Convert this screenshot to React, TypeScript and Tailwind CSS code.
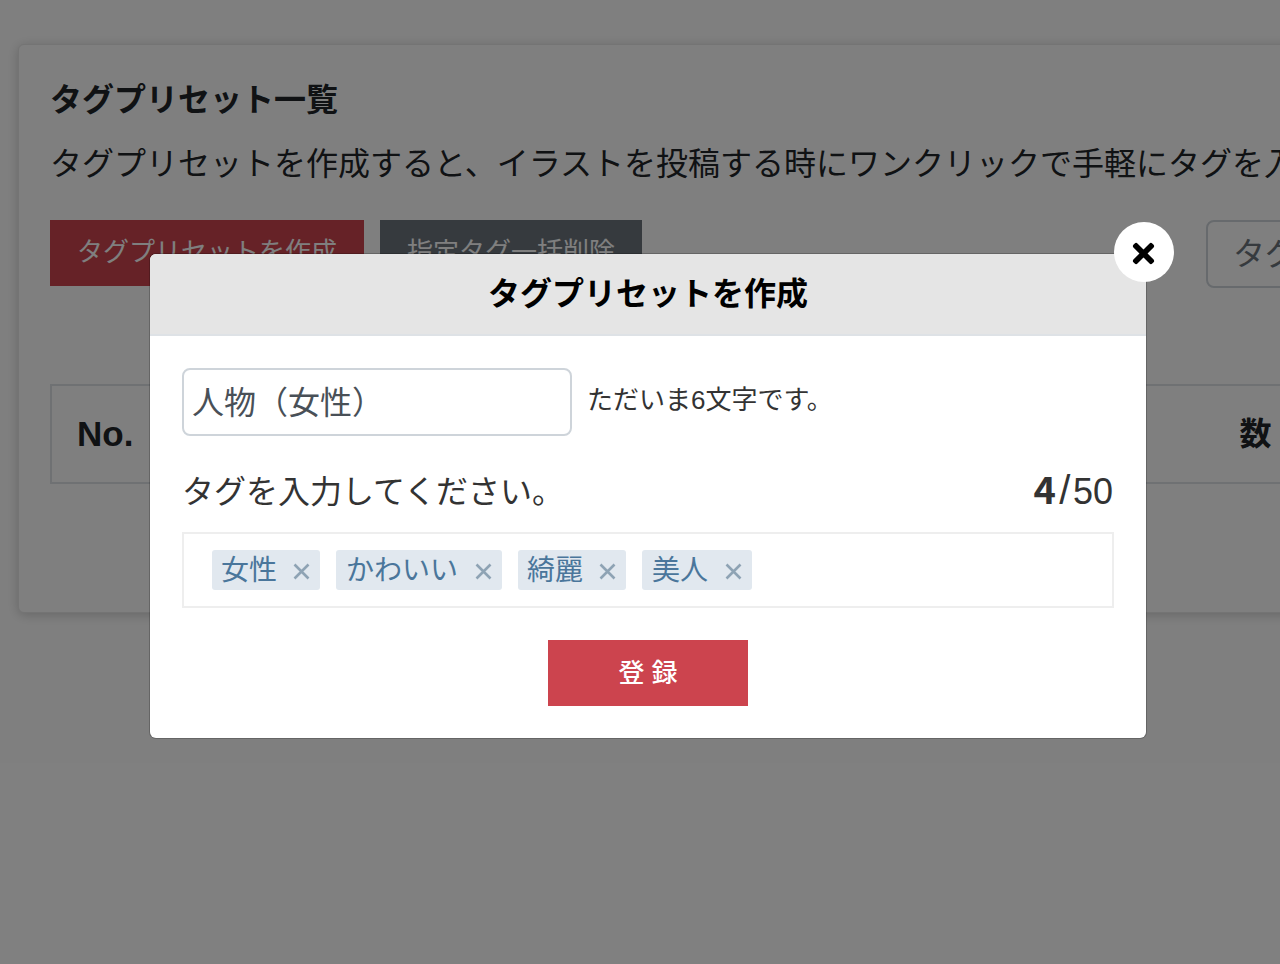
import React from 'react'
import { FaTimes } from 'react-icons/fa'

const tags = [
  { label: '女性', size: 'w-[108px] pl-[9px]' },
  { label: 'かわいい', size: 'w-[166px] pl-[10px]' },
  { label: '綺麗', size: 'w-[108px] pl-[9px]' },
  { label: '美人', size: 'w-[110px] pl-[10px]' },
]

function TagChip({ label, size }: { label: string; size: string }) {
  return (
    <span className={`flex h-10 items-center justify-between rounded-[3px] bg-[#e1e8ef] pr-[10px] text-[28px] leading-10 text-[#4a769b] ${size}`}>
      <span className="mt-[1px]">{label}</span>
      <svg width="17" height="17" viewBox="0 0 17 17" className="mt-[3px]">
        <path d="M1.5 1.5 15.5 15.5M15.5 1.5 1.5 15.5" stroke="#8ea3b4" strokeWidth="2.6" fill="none" />
      </svg>
    </span>
  )
}

function BackgroundPage() {
  return (
    <div className="ml-[18px] mt-[44px] h-[569px] w-[1500px] rounded-[6px] border border-[#e8e8e8] bg-white pl-[31px] pt-[31px] shadow-[0_2px_12px_rgba(0,0,0,0.2)]">
      <h2 className="text-[32px] font-bold leading-[48px] text-[#212529]">タグプリセット一覧</h2>
      <p className="mt-[16px] whitespace-nowrap text-[32px] leading-[48px] text-[#212529]">
        タグプリセットを作成すると、イラストを投稿する時にワンクリックで手軽にタグを入力できます。
      </p>
      <div className="mt-[32px] flex items-start gap-4">
        <button className="h-[66px] w-[314px] shrink-0 bg-[#cc444e] pb-[2px] text-[26px] text-white">タグプリセットを作成</button>
        <button className="h-[66px] w-[262px] shrink-0 bg-[#6c757d] pb-[2px] text-[26px] text-white">指定タグ一括削除</button>
        <div className="ml-[548px] flex h-[68px] w-[400px] shrink-0 items-center whitespace-nowrap rounded-[8px] border-2 border-[#ced4da] px-[25px] text-[32px] text-[#6c757d]">
          タグ名で検索
        </div>
      </div>
      <div className="mt-[96px] flex h-[100px] w-[1440px] items-center border-2 border-[#dee2e6] pl-[25px]">
        <span className="text-[35px] font-bold text-[#212529]">No.</span>
        <span className="ml-[1106px] text-[32px] font-bold text-[#212529]">数</span>
      </div>
    </div>
  )
}

export default function App() {
  return (
    <div className="relative h-[964px] w-[1280px] overflow-hidden bg-white font-['Liberation_Sans','Noto_Sans_CJK_JP',sans-serif]">
      <BackgroundPage />

      <div className="absolute inset-0 bg-black/50 pl-[150px] pt-[254px]">
        <div className="relative w-[996px] rounded-[6px] bg-white shadow-[0_0_0_1px_rgba(0,0,0,0.2)]">
          <button className="absolute left-[964px] top-[-32px] flex h-[60px] w-[60px] items-center justify-center rounded-full bg-white pr-[2px] pt-[2px] text-black">
            <FaTimes size={31} />
          </button>

          <div className="flex h-[82px] items-center justify-center rounded-t-[6px] border-b-2 border-[#dee2e6] bg-[#e5e5e5] text-[32px] font-bold text-black">
            タグプリセットを作成
          </div>

          <div className="p-[32px]">
            <div className="flex items-center gap-[15px]">
              <input
                defaultValue="人物（女性）"
                className="h-[68px] w-[390px] rounded-[8px] border-2 border-[#ced4da] bg-white px-2 pb-1 text-[32px] text-[#495057] outline-none"
              />
              <span className="pb-[4px] text-[26px] text-[#333]">ただいま6文字です。</span>
            </div>

            <div className="mt-[32px] flex h-[48px] items-center justify-between text-[32px] text-[#333]">
              <span>タグを入力してください。</span>
              <span className="mr-[1px] flex items-baseline pb-[6px] text-[36px] leading-none">
                <b className="mr-[1px] text-[38px] font-['Noto_Sans_CJK_JP',sans-serif]">4</b>
                <span className="mx-[2.5px] text-[40px]">/</span>
                50
              </span>
            </div>

            <div className="mt-[16px] flex h-[76px] items-center gap-4 border-2 border-[#eeeeee] pl-[28px]">
              {tags.map((t) => (
                <TagChip key={t.label} label={t.label} size={t.size} />
              ))}
            </div>

            <div className="mt-[32px] flex justify-center">
              <button className="h-[66px] w-[200px] bg-[#cc444e] text-[26px] font-medium text-white">登 録</button>
            </div>
          </div>
        </div>
      </div>
    </div>
  )
}
